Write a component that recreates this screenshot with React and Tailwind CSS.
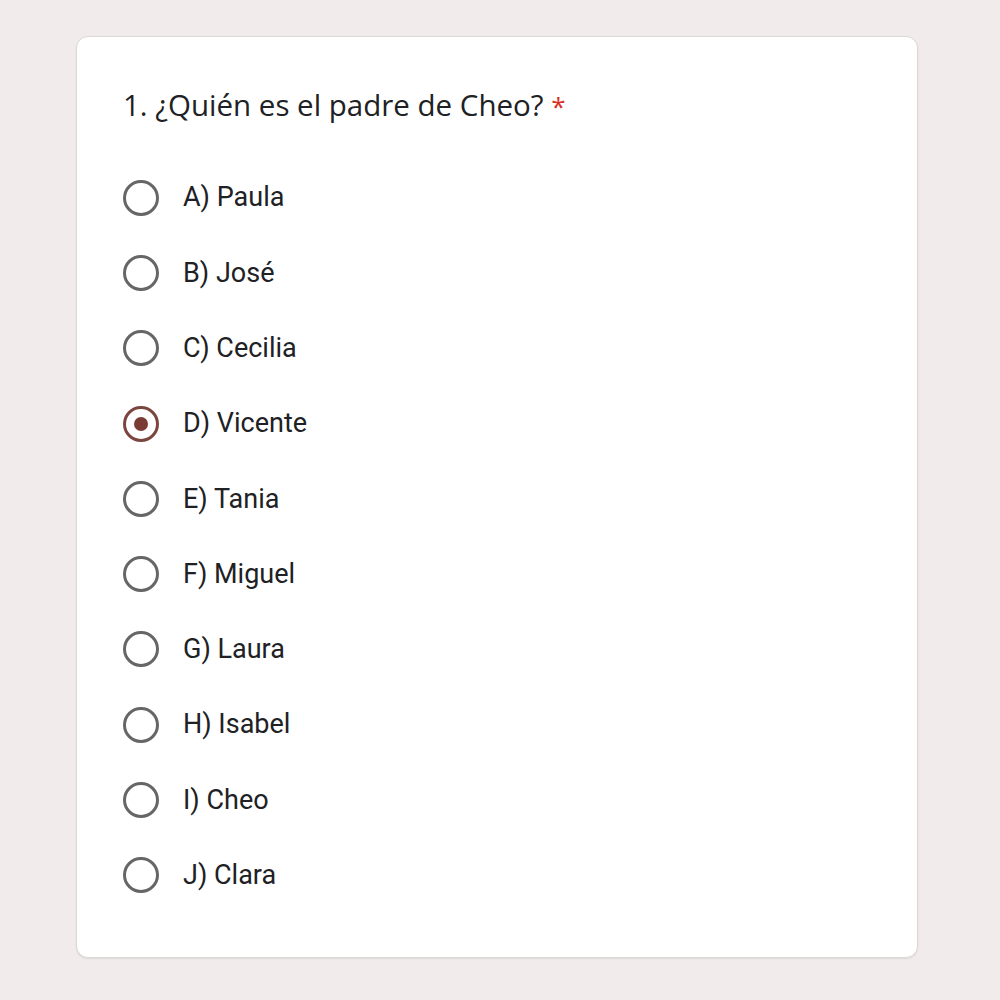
const OPTIONS = [
  'A) Paula',
  'B) José',
  'C) Cecilia',
  'D) Vicente',
  'E) Tania',
  'F) Miguel',
  'G) Laura',
  'H) Isabel',
  'I) Cheo',
  'J) Clara',
]

const Radio = ({ checked }) => (
  <div
    className={`w-9 h-9 rounded-full border-[3px] flex items-center justify-center shrink-0 ${
      checked ? 'border-[#7b4640]' : 'border-[#666666]'
    }`}
  >
    {checked && <div className="w-[14px] h-[14px] rounded-full bg-[#7b3b35]" />}
  </div>
)

export default function App() {
  return (
    <div className="w-[1000px] h-[1000px] bg-[#f1ebeb] pt-9 pl-[76px]">
      <div
        className="w-[842px] h-[922px] bg-white rounded-xl border border-[#dcd8d8] shadow-[0_1px_2px_rgba(0,0,0,0.08)] pl-[46px] pt-[52px]"
        style={{ fontFamily: 'Roboto, "Liberation Sans", sans-serif' }}
      >
        <h1
          className="text-[29.5px] text-[#202124] leading-8"
          style={{ fontFamily: '"Open Sans", Roboto, sans-serif' }}
        >
          1. ¿Quién es el padre de Cheo? <span className="text-[#d93025] text-[26px]">*</span>
        </h1>
        <div className="mt-[38px] flex flex-col">
          {OPTIONS.map((o) => (
            <div key={o} className="flex items-center h-[75.3px] gap-[24px]">
              <Radio checked={o === 'D) Vicente'} />
              <span className="text-[27px] text-[#202124]">{o}</span>
            </div>
          ))}
        </div>
      </div>
    </div>
  )
}
